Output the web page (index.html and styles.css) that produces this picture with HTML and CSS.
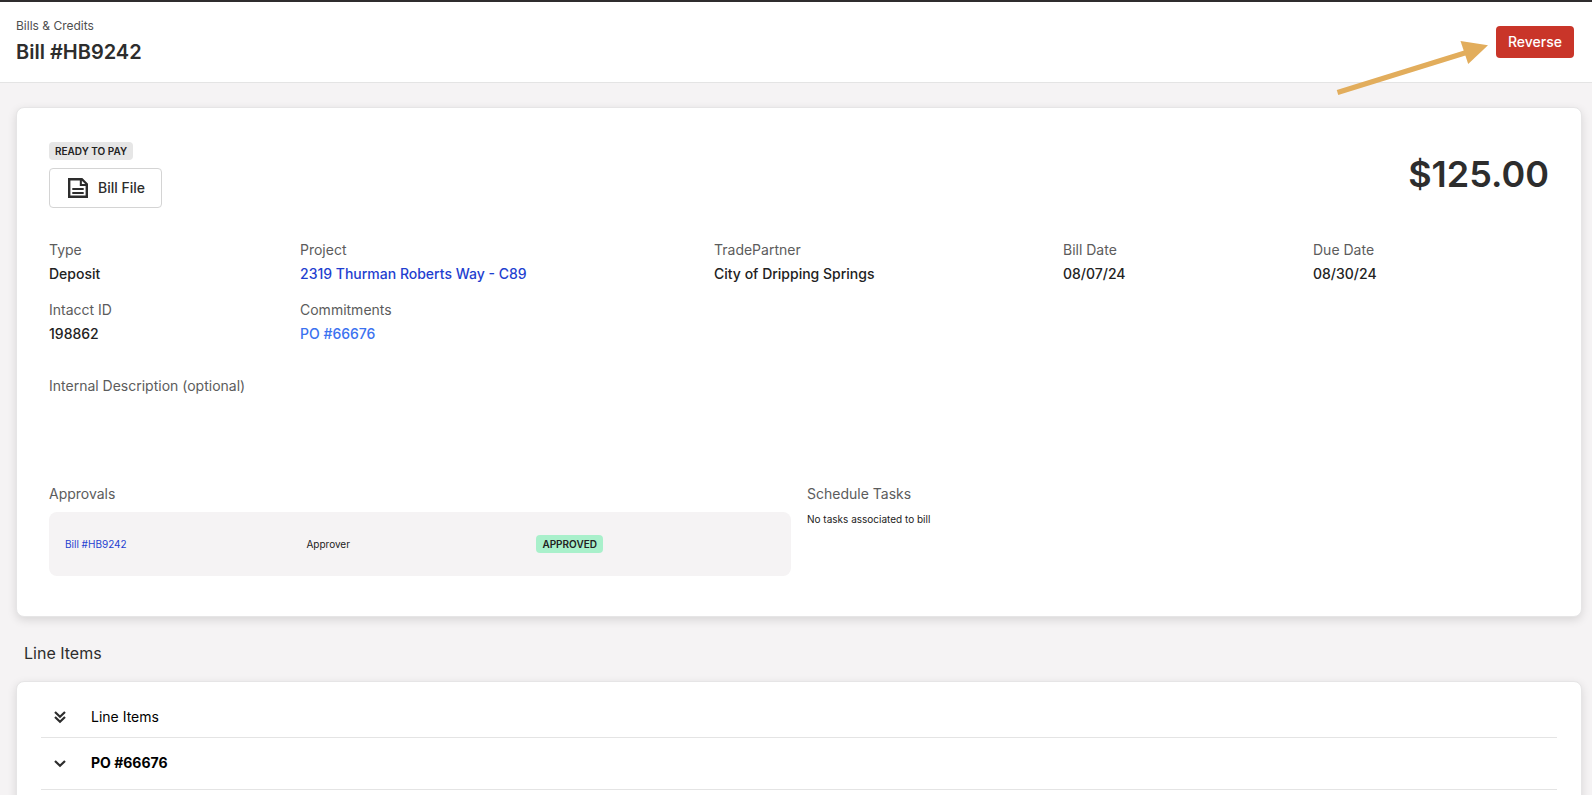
FILE: index.html
```html
<!DOCTYPE html>
<html lang="en">
<head>
<meta charset="utf-8">
<meta name="viewport" content="width=device-width, initial-scale=1">
<title>Bill #HB9242</title>
<link rel="stylesheet" href="styles.css">
</head>
<body>
<div class="page">
  <header class="page-header">
    <div class="heading">
      <span class="crumb">Bills &amp; Credits</span>
      <h1 class="title">Bill #HB9242</h1>
    </div>
    <button class="btn-danger" type="button">Reverse</button>
    <svg class="pointer" width="156" height="60" viewBox="0 0 156 60" aria-hidden="true">
      <path d="M3.500 54.500 134 14" fill="none" stroke="#e2ad5c" stroke-width="5"/>
      <path d="M126.500 3 154 7.300 134.200 26Z" fill="#e2ad5c"/>
    </svg>
  </header>

  <main class="content">
    <section class="card bill">
      <div class="summary">
        <div class="status">
          <span class="badge">READY TO PAY</span>
          <button class="btn-file" type="button">
            <svg width="24" height="24" viewBox="0 0 24 24" aria-hidden="true">
              <path d="M3.200 3.200H15.800L20.800 8.200V20.800H3.200Z" fill="none" stroke="#2d2d2d" stroke-width="2.400"/>
              <path d="M13.800 3V10H21V7.500L16.500 3Z" fill="#2d2d2d"/>
              <path d="M15.900 4.700V8H19.200Z" fill="#fff"/>
              <path d="M6.300 13.100H17.700M6.300 16.900H17.700" stroke="#2d2d2d" stroke-width="2"/>
            </svg>
            Bill File
          </button>
        </div>
        <p class="amount">$125.00</p>
      </div>

      <dl class="fields">
        <div class="field"><dt>Type</dt><dd>Deposit</dd></div>
        <div class="field"><dt>Project</dt><dd><a class="link" href="#">2319 Thurman Roberts Way - C89</a></dd></div>
        <div class="field"><dt>TradePartner</dt><dd>City of Dripping Springs</dd></div>
        <div class="field"><dt>Bill Date</dt><dd>08/07/24</dd></div>
        <div class="field"><dt>Due Date</dt><dd>08/30/24</dd></div>
        <div class="field"><dt>Intacct ID</dt><dd>198862</dd></div>
        <div class="field"><dt>Commitments</dt><dd><a class="link-light" href="#">PO #66676</a></dd></div>
      </dl>

      <div class="description">
        <h2 class="label">Internal Description (optional)</h2>
      </div>

      <div class="related">
        <div class="related-col">
          <h2 class="label">Approvals</h2>
          <div class="panel">
            <table class="approvals">
              <tr>
                <td><a class="link" href="#">Bill #HB9242</a></td>
                <td>Approver</td>
                <td><span class="badge badge-success">APPROVED</span></td>
              </tr>
            </table>
          </div>
        </div>
        <div class="related-col">
          <h2 class="label">Schedule Tasks</h2>
          <p class="note">No tasks associated to bill</p>
        </div>
      </div>
    </section>

    <h2 class="section-title">Line Items</h2>

    <section class="card items">
      <table class="items-table">
        <thead>
          <tr>
            <th class="toggle">
              <button class="icon-btn" type="button" aria-label="Expand all">
                <svg width="16" height="16" viewBox="0 0 16 16" aria-hidden="true"><path d="M3 3 8 7.800 13 3M3 8 8 12.800 13 8" fill="none" stroke="#2d2d2d" stroke-width="2.200"/></svg>
              </button>
            </th>
            <th>Line Items</th>
          </tr>
        </thead>
        <tbody>
          <tr>
            <td class="toggle">
              <button class="icon-btn" type="button" aria-label="Expand PO #66676">
                <svg width="16" height="16" viewBox="0 0 16 16" aria-hidden="true"><path d="M3 6 8 10.800 13 6" fill="none" stroke="#2d2d2d" stroke-width="2.200"/></svg>
              </button>
            </td>
            <td>PO #66676</td>
          </tr>
        </tbody>
      </table>
    </section>
  </main>
</div>
</body>
</html>
```
FILE: styles.css
```css
* {
  box-sizing: border-box;
}

body,
h1,
h2,
p,
dl,
dd {
  margin: 0;
}

body {
  background: #f5f3f4;
  color: #222;
  font-family: Inter, "Liberation Sans", sans-serif;
  font-size: 14px;
  line-height: 20px;
}

button {
  font: inherit;
  cursor: pointer;
}

a {
  text-decoration: none;
}

.page {
  height: 100vh;
  overflow: hidden;
  border-top: 2px solid #2f2d2e;
}

.page-header {
  position: relative;
  display: flex;
  align-items: center;
  justify-content: space-between;
  padding: 16px 18px 16px 16px;
  background: #fff;
  border-bottom: 1px solid #e4e4e4;
}

.heading {
  display: flex;
  flex-direction: column;
  gap: 4px;
}

.crumb {
  color: #4f4f4f;
  font-size: 12px;
  line-height: 16px;
}

.title {
  color: #2d2d2d;
  font-size: 20px;
  font-weight: 600;
  line-height: 28px;
}

.btn-danger {
  height: 32px;
  padding: 0 12px;
  border: 0;
  border-radius: 4px;
  background: #c93529;
  color: #fff;
  font-weight: 500;
}

.pointer {
  position: absolute;
  top: 36px;
  right: 102px;
}

.content {
  padding: 24px 10px 24px 16px;
}

.card {
  background: #fff;
  border: 1px solid #e6e5e6;
  border-radius: 8px;
  box-shadow: 0 3px 10px rgba(0, 0, 0, 0.12);
}

.bill {
  padding: 32px 32px 40px;
}

.summary {
  display: flex;
  justify-content: space-between;
  align-items: flex-start;
}

.status {
  display: flex;
  flex-direction: column;
  align-items: flex-start;
  gap: 8px;
  padding-top: 2px;
}

.badge {
  display: inline-block;
  padding: 0 6px;
  border-radius: 4px;
  background: #e6e6e6;
  color: #222;
  font-size: 10px;
  font-weight: 600;
  line-height: 18px;
}

.badge-success {
  background: #a9f0cb;
}

.btn-file {
  display: flex;
  align-items: center;
  gap: 8px;
  height: 40px;
  padding: 0 16px;
  border: 1px solid #d4d4d4;
  border-radius: 4px;
  background: #fff;
  color: #2d2d2d;
  font-weight: 500;
}

.amount {
  padding-top: 12px;
  color: #2d2d2d;
  font-size: 36px;
  font-weight: 600;
  line-height: 44px;
}

.fields {
  display: grid;
  grid-template-columns: 235fr 398fr 333fr 234fr 236fr;
  gap: 16px;
  padding-top: 32px;
}

.field dt,
.label {
  color: #5c5c5c;
  font-size: 14px;
  font-weight: 400;
  line-height: 20px;
}

.field dd {
  padding-top: 4px;
  font-weight: 500;
}

.link {
  color: #1f3fd0;
}

.link-light {
  color: #3b72f0;
}

.description {
  min-height: 108px;
  margin-top: 32px;
}

.related {
  display: grid;
  grid-template-columns: 1fr 1fr;
  gap: 16px;
}

.panel {
  margin-top: 8px;
  padding: 16px;
  border-radius: 8px;
  background: #f5f3f4;
}

.approvals {
  width: 100%;
  border-collapse: collapse;
  table-layout: fixed;
  font-size: 10px;
}

.approvals td {
  height: 32px;
  padding: 0;
}

.approvals td:nth-child(1) {
  width: 34%;
}

.approvals td:nth-child(2) {
  width: 230px;
}

.note {
  padding-top: 5px;
  font-size: 10px;
}

.section-title {
  padding: 24px 8px 16px;
  color: #2d2d2d;
  font-size: 16px;
  font-weight: 400;
  line-height: 24px;
}

.items {
  padding: 16px 24px;
}

.items-table {
  width: 100%;
  border-collapse: collapse;
  color: #000;
  text-align: left;
}

.items-table th,
.items-table td {
  height: 52px;
  padding: 0;
  border-bottom: 1px solid #e4e4e4;
  font-weight: 700;
}

.items-table th {
  height: 39px;
  font-weight: 400;
}

.items-table .toggle {
  width: 50px;
}

.icon-btn {
  display: flex;
  padding: 0;
  margin-left: 11px;
  border: 0;
  background: none;
}
```
